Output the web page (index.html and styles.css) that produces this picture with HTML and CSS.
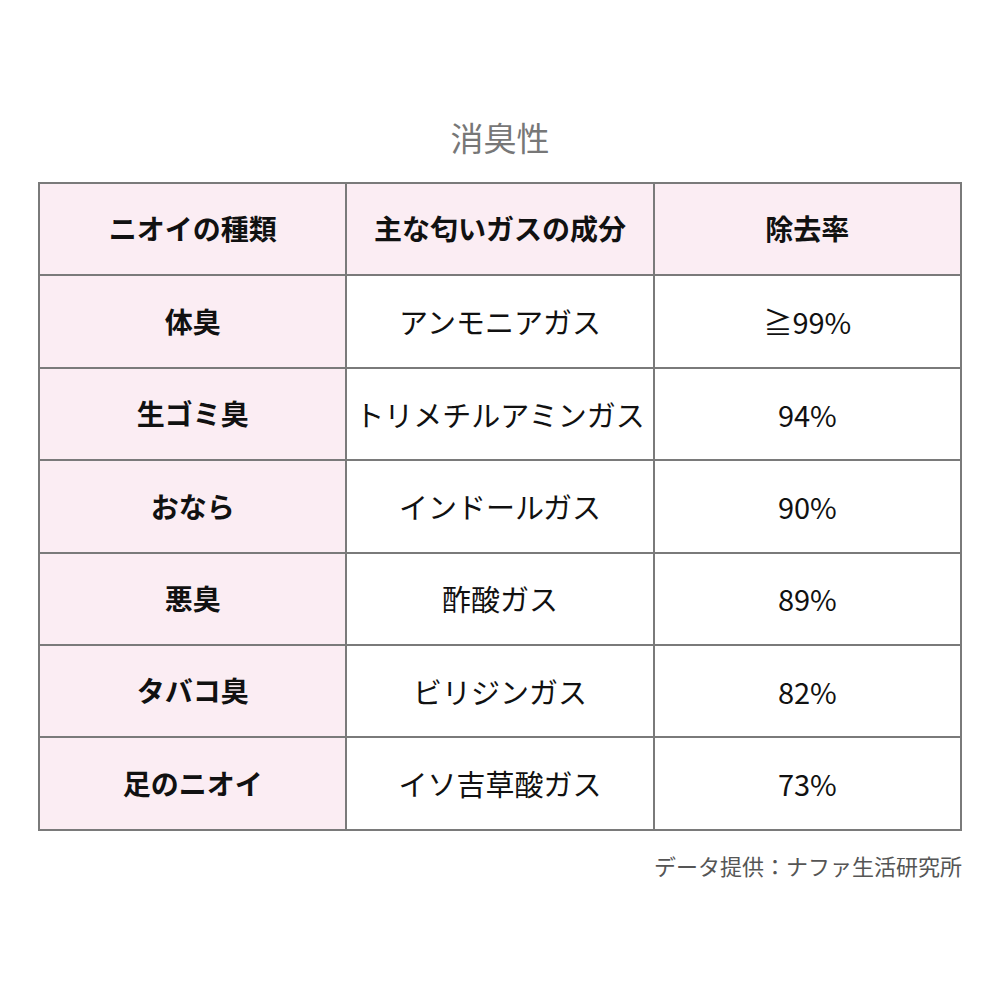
FILE: index.html
```html
<!DOCTYPE html>
<html lang="ja">
<head>
<meta charset="utf-8">
<link rel="stylesheet" href="styles.css">
</head>
<body>
<div class="page">
  <h1 class="title">消臭性</h1>
  <table class="odor">
    <thead>
      <tr><th class="type">ニオイの種類</th><th>主な匂いガスの成分</th><th>除去率</th></tr>
    </thead>
    <tbody>
      <tr><th class="type">体臭</th><td>アンモニアガス</td><td>≧99%</td></tr>
      <tr><th class="type">生ゴミ臭</th><td>トリメチルアミンガス</td><td>94%</td></tr>
      <tr><th class="type">おなら</th><td>インドールガス</td><td>90%</td></tr>
      <tr><th class="type">悪臭</th><td>酢酸ガス</td><td>89%</td></tr>
      <tr><th class="type">タバコ臭</th><td>ビリジンガス</td><td>82%</td></tr>
      <tr><th class="type">足のニオイ</th><td>イソ吉草酸ガス</td><td>73%</td></tr>
    </tbody>
  </table>
  <p class="source">データ提供：ナファ生活研究所</p>
</div>
</body>
</html>
```

FILE: styles.css
```css
html, body {
  margin: 0;
  padding: 0;
  background: #ffffff;
}
body {
  font-family: "Noto Sans CJK JP", "Noto Sans", sans-serif;
  color: #111;
}
.page {
  width: 924px;
  margin-left: 38px;
  padding-top: 113px;
}
.title {
  margin: 0 0 21px 0;
  font-size: 33px;
  line-height: 48px;
  font-weight: 400;
  color: #777;
  text-align: center;
}
.odor {
  width: 924px;
  border-collapse: collapse;
  table-layout: fixed;
}
.odor tr {
  height: 92.4px;
}
.odor th, .odor td {
  border: 2px solid #7a7a7a;
  text-align: center;
  vertical-align: middle;
  line-height: 1.2;
  padding: 0;
  width: 33.33%;
}
.odor th {
  font-size: 28px;
  font-weight: 700;
}
.odor td {
  font-size: 29px;
  font-weight: 400;
}
.odor thead th,
.odor .type {
  background: #fbedf3;
}
.source {
  margin: 18px 0 0 0;
  font-size: 22px;
  line-height: 32px;
  color: #555;
  text-align: right;
}
```
